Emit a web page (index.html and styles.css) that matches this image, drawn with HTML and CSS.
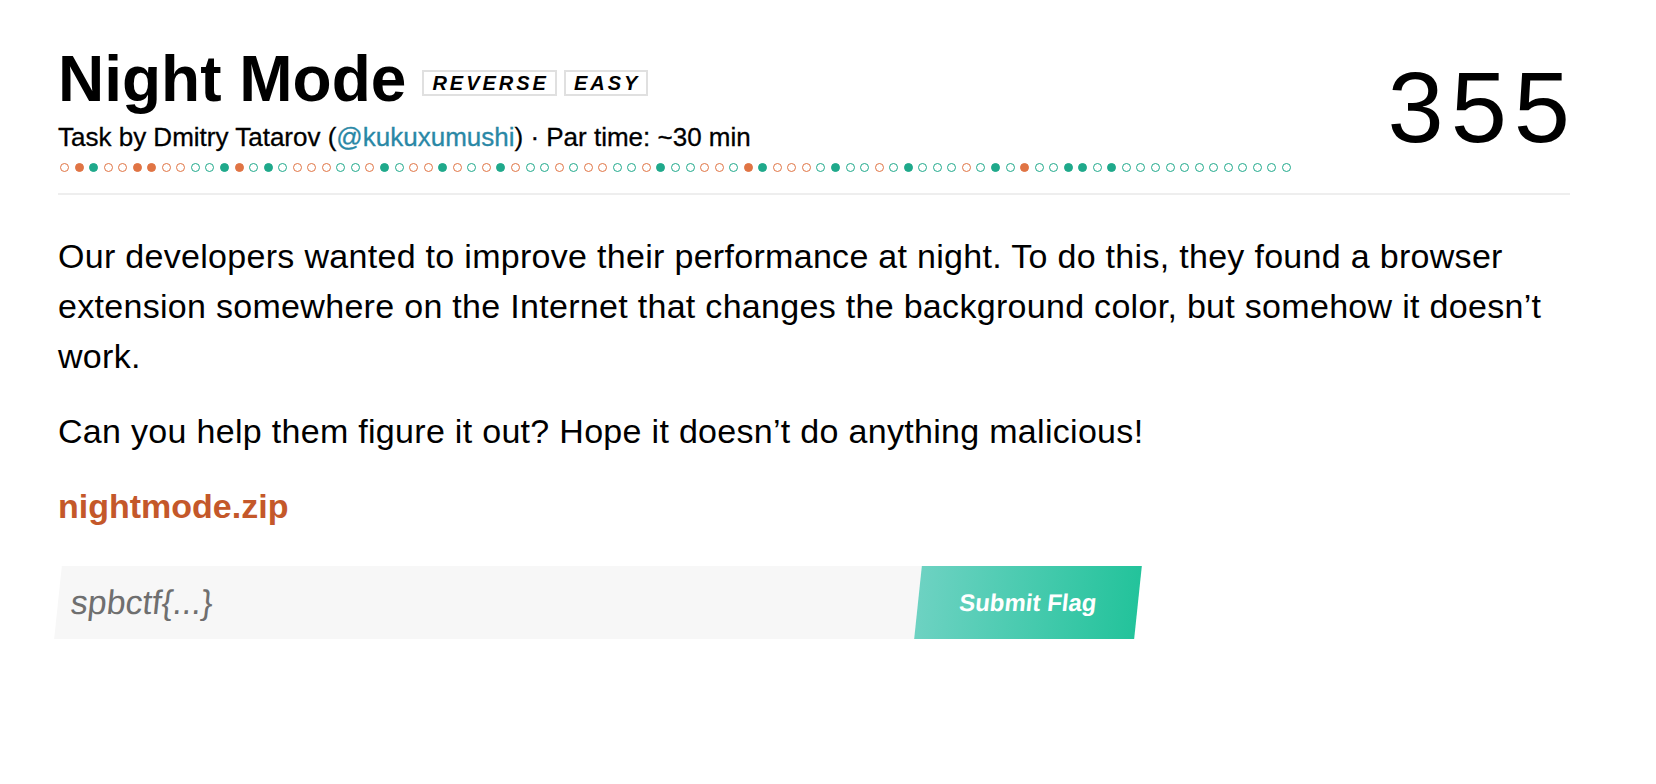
FILE: index.html
```html
<!DOCTYPE html>
<html lang="en">
<head>
<meta charset="utf-8">
<title>Night Mode</title>
<link rel="stylesheet" href="styles.css">
</head>
<body>
<main class="task">
  <header class="task-head">
    <div class="task-info">
      <div class="title-row">
        <h1 class="task-title">Night Mode</h1>
        <span class="tag">REVERSE</span>
        <span class="tag">EASY</span>
      </div>
      <p class="byline">Task by Dmitry Tatarov (<a class="author" href="#">@kukuxumushi</a>) · Par time: ~30 min</p>
      <div class="solves">
        <i class="dot o"></i><i class="dot o on"></i><i class="dot g on"></i><i class="dot o"></i><i class="dot o"></i><i class="dot o on"></i><i class="dot o on"></i><i class="dot o"></i><i class="dot o"></i><i class="dot g"></i>
        <i class="dot g"></i><i class="dot g on"></i><i class="dot o on"></i><i class="dot g"></i><i class="dot g on"></i><i class="dot g"></i><i class="dot o"></i><i class="dot o"></i><i class="dot o"></i><i class="dot g"></i>
        <i class="dot g"></i><i class="dot o"></i><i class="dot g on"></i><i class="dot g"></i><i class="dot o"></i><i class="dot o"></i><i class="dot g on"></i><i class="dot o"></i><i class="dot g"></i><i class="dot o"></i>
        <i class="dot g on"></i><i class="dot o"></i><i class="dot g"></i><i class="dot g"></i><i class="dot o"></i><i class="dot g"></i><i class="dot o"></i><i class="dot o"></i><i class="dot g"></i><i class="dot g"></i>
        <i class="dot o"></i><i class="dot g on"></i><i class="dot g"></i><i class="dot g"></i><i class="dot o"></i><i class="dot o"></i><i class="dot g"></i><i class="dot o on"></i><i class="dot g on"></i><i class="dot o"></i>
        <i class="dot o"></i><i class="dot o"></i><i class="dot g"></i><i class="dot g on"></i><i class="dot g"></i><i class="dot g"></i><i class="dot o"></i><i class="dot g"></i><i class="dot g on"></i><i class="dot g"></i>
        <i class="dot g"></i><i class="dot g"></i><i class="dot o"></i><i class="dot g"></i><i class="dot g on"></i><i class="dot g"></i><i class="dot o on"></i><i class="dot g"></i><i class="dot g"></i><i class="dot g on"></i>
        <i class="dot g on"></i><i class="dot g"></i><i class="dot g on"></i><i class="dot g"></i><i class="dot g"></i><i class="dot g"></i><i class="dot g"></i><i class="dot g"></i><i class="dot g"></i><i class="dot g"></i>
        <i class="dot g"></i><i class="dot g"></i><i class="dot g"></i><i class="dot g"></i><i class="dot g"></i>
      </div>
    </div>
    <div class="score">355</div>
  </header>

  <section class="task-body">
    <p class="text">Our developers wanted to improve their performance at night. To do this, they found a browser extension somewhere on the Internet that changes the background color, but somehow it doesn’t work.</p>
    <p class="text">Can you help them figure it out? Hope it doesn’t do anything malicious!</p>
    <p class="text"><a class="file" href="#">nightmode.zip</a></p>
  </section>

  <form class="flag-form" onsubmit="return false">
    <input class="flag-input" type="text" placeholder="spbctf{...}">
    <button class="flag-submit" type="submit">Submit Flag</button>
  </form>
</main>
</body>
</html>
```

FILE: styles.css
```css
html, body {
  margin: 0;
  padding: 0;
  background: #ffffff;
}

body {
  font-family: "Liberation Sans", Arial, sans-serif;
  color: #000;
}

.task {
  width: 1512px;
  margin-left: 58px;
  padding-top: 47px;
}

.task-head {
  display: flex;
  justify-content: space-between;
  align-items: flex-start;
  padding-bottom: 21px;
  border-bottom: 2px solid #eeeeee;
}

.title-row {
  display: flex;
  align-items: center;
}

.task-title {
  margin: 0;
  font-size: 64px;
  line-height: 64px;
  font-weight: 700;
}

.tag {
  margin-top: 7px;
  margin-left: 7px;
  padding: 0 6px 0 8px;
  border: 2px solid #e0e0e0;
  font-size: 20px;
  line-height: 22px;
  font-weight: 700;
  font-style: italic;
  letter-spacing: 3px;
}

.task-title + .tag {
  margin-left: 16px;
}

.byline {
  margin: 11px 0 0;
  font-size: 26px;
  line-height: 31px;
  -webkit-text-stroke: 0.3px #000;
}

.author {
  color: #2a88a6;
  text-decoration: none;
  -webkit-text-stroke: 0.3px #2a88a6;
}

.solves {
  display: flex;
  gap: 5.55px;
  margin-top: 10px;
  padding-left: 2px;
}

.dot {
  display: block;
  width: 9px;
  height: 9px;
  box-sizing: border-box;
  border-radius: 50%;
  border: 1.5px solid;
}

.dot.o { border-color: #e07444; }
.dot.g { border-color: #1fa98b; }
.dot.o.on { background: #e07444; }
.dot.g.on { background: #1fa98b; }

.score {
  margin-top: 9.5px;
  margin-right: -7px;
  font-size: 101px;
  line-height: 1;
  letter-spacing: 7px;
}

.task-body {
  margin-top: 36px;
}

.text {
  margin: 0 0 25px;
  font-size: 34px;
  line-height: 50px;
  letter-spacing: 0.3px;
}

.file {
  color: #c4582a;
  font-size: 34px;
  font-weight: 700;
  letter-spacing: 0;
  text-decoration: none;
}

.flag-form {
  display: flex;
  width: 1080px;
  height: 73px;
  margin-top: 35px;
  transform: skewX(-6deg);
}

.flag-input {
  flex: 0 0 860px;
  box-sizing: border-box;
  height: 73px;
  margin: 0;
  padding: 0 13px;
  border: none;
  outline: none;
  background: #f7f7f7;
  font-family: "Liberation Sans", Arial, sans-serif;
  font-size: 34px;
  color: #333;
}

.flag-input::placeholder {
  color: #6f6f6f;
}

.flag-submit {
  flex: 0 0 220px;
  height: 73px;
  margin: 0;
  padding: 0;
  border: none;
  background: linear-gradient(to right, #6dd2c2, #23c39b);
  color: #fff;
  font-family: "Liberation Sans", Arial, sans-serif;
  font-size: 24px;
  font-weight: 700;
  cursor: pointer;
}
```
